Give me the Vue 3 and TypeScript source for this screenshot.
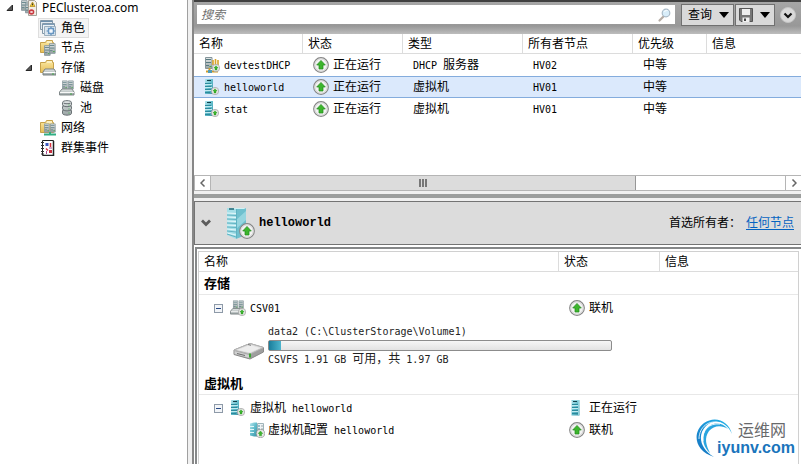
<script setup lang="ts">
import { h, ref } from 'vue'

interface TreeItem {
  label: string
  icon: string
  level: number
  open?: boolean
}

interface Role {
  name: string
  icon: string
  status: string
  type: string
  owner: string
  priority: string
}

const tree: TreeItem[] = [
  { label: 'PECluster.oa.com', icon: 'cluster', level: 0, open: true },
  { label: '角色', icon: 'roles', level: 1 },
  { label: '节点', icon: 'nodes', level: 1 },
  { label: '存储', icon: 'storage', level: 1, open: true },
  { label: '磁盘', icon: 'disks', level: 2 },
  { label: '池', icon: 'pool', level: 2 },
  { label: '网络', icon: 'network', level: 1 },
  { label: '群集事件', icon: 'events', level: 1 },
]

const roles: Role[] = [
  { name: 'devtestDHCP', icon: 'dhcp', status: '正在运行', type: 'DHCP 服务器', owner: 'HV02', priority: '中等' },
  { name: 'helloworld', icon: 'vm', status: '正在运行', type: '虚拟机', owner: 'HV01', priority: '中等' },
  { name: 'stat', icon: 'vm', status: '正在运行', type: '虚拟机', owner: 'HV01', priority: '中等' },
]

const selectedNode = ref('角色')
const selectedRole = ref('helloworld')
const query = ref('')
const usedPercent = 3.5

// Latin runs are set in a half-width face beside the full-width characters.
const Mixed = (props: { text: string }) =>
  h(
    'span',
    { class: 'mixed' },
    (props.text.match(/[\x20-\x7e]+|[^\x20-\x7e]+/g) ?? []).map((part) =>
      h('span', { class: /^[\x20-\x7e]/.test(part) ? 'latin' : 'han' }, part),
    ),
  )
Mixed.props = ['text']
</script>

<template>
  <div class="app">
    <svg class="sprite" width="0" height="0" aria-hidden="true">
      <defs>
        <linearGradient id="g-teal" x1="0" y1="0" x2="1" y2="1">
          <stop offset="0" stop-color="#b5e6ee" />
          <stop offset="0.5" stop-color="#62bccb" />
          <stop offset="1" stop-color="#3a93a6" />
        </linearGradient>
        <linearGradient id="g-gray" x1="0" y1="0" x2="0" y2="1">
          <stop offset="0" stop-color="#e4e8e8" />
          <stop offset="1" stop-color="#98a2a3" />
        </linearGradient>
        <linearGradient id="g-folder" x1="0" y1="0" x2="0" y2="1">
          <stop offset="0" stop-color="#fbe9a4" />
          <stop offset="1" stop-color="#e5bd55" />
        </linearGradient>
        <linearGradient id="g-arc" x1="0" y1="1" x2="1" y2="0">
          <stop offset="0" stop-color="#1470bd" />
          <stop offset="0.6" stop-color="#1c9bdc" />
          <stop offset="1" stop-color="#28b7e8" />
        </linearGradient>
        <symbol id="i-up" viewBox="0 0 16 16">
          <circle cx="8" cy="8" r="7.3" fill="#f3f3f3" stroke="#858585" stroke-width="1.2" />
          <circle cx="8" cy="8" r="6.2" fill="none" stroke="#d2d2d2" />
          <path d="M8 3.4 12.3 8H10v4H6V8H3.7z" fill="#3db52d" stroke="#218a1b" stroke-width="0.7" />
        </symbol>
        <symbol id="i-tower" viewBox="0 0 16 16">
          <path d="M2.500.5h8v15h-8z" fill="url(#g-teal)" />
          <path d="M2.500.5h8M9.500.5v15" stroke="#8fd3de" />
          <path d="M4 1.500h4" stroke="#123f49" />
          <path d="M3 4.500h6M3 7.500h6M3 10.500h6M3 13.500h6" stroke="#2b8a9d" />
          <path d="M3 5.500h6M3 8.500h6M3 11.500h6" stroke="#c2eaf0" />
        </symbol>
        <symbol id="i-server" viewBox="0 0 8 12">
          <path d="M.5.5h6.500v11H.5z" fill="url(#g-gray)" stroke="#84949a" />
          <path d="M1 2.500h5M1 5.500h5M1 8.500h3" stroke="#567a80" />
          <path d="M4.500 9.500h2" stroke="#43a847" />
        </symbol>
        <symbol id="i-vm" viewBox="0 0 16 16">
          <path d="M1 0h8v15H1z" fill="url(#g-teal)" />
          <path d="M3 1.500h4" stroke="#123f49" />
          <path d="M1 4.500h6M1 7.500h6M1 10.500h6M1 13.500h5" stroke="#2b8a9d" />
          <path d="M1 5.500h7M1 8.500h7M1 11.500h7" stroke="#c2eaf0" />
          <use href="#i-up" x="7" y="8" width="8" height="8" />
        </symbol>
        <symbol id="i-config" viewBox="0 0 16 16">
          <path d="M1 1.500 5 .5v14l-4-1zM5 .5h3v14H5z" fill="url(#g-teal)" />
          <path d="M1 4.500h4M1 7.500h4M1 10.500h4" stroke="#e3f8fa" />
          <path d="M8.500 1.500h6v12h-6z" fill="#eef3f5" stroke="#9fb4ba" />
          <path d="M9 4h2M9 7h2M9 10h2" stroke="#398fa3" />
          <path d="M12 4h2M12 7h2" stroke="#97a5a9" />
          <use href="#i-up" x="7" y="7" width="9" height="9" />
        </symbol>
        <symbol id="i-dhcp" viewBox="0 0 16 16">
          <use href="#i-server" x="1" y="0" width="8" height="12" />
          <path d="M9 3v5M11.500 2v6M14 3v5" stroke="#d9a32a" stroke-width="1.600" />
          <path d="M2 14.500h12M5.500 11v3" stroke="#d09c2a" stroke-width="2" />
          <path d="M4 13h4v3H4z" fill="#4f9bb8" />
          <use href="#i-up" x="8" y="7" width="8" height="8" />
        </symbol>
        <symbol id="i-cluster" viewBox="0 0 16 16">
          <use href="#i-server" x="0" y="0" width="7" height="11" />
          <use href="#i-server" x="4" y="2" width="7" height="12" />
          <path d="M7.500.5h6l2 2v13h-8z" fill="#f3eee6" stroke="#a6a198" />
          <path d="m11.500 2 2.500 4.500H9z" fill="#f3cc37" stroke="#ad8717" stroke-width=".7" />
          <path d="M11.500 3.500v1.800" stroke="#333" />
          <circle cx="10.500" cy="12" r="2.800" fill="#c93b42" />
          <path d="m9.500 11 2 2m0-2-2 2" stroke="#fff" />
        </symbol>
        <symbol id="i-roles" viewBox="0 0 16 16">
          <path d="M.5.5h12v9H.5z" fill="#e3eaf0" stroke="#8398a9" />
          <path d="M1 1.500h11" stroke="#6d90ad" />
          <path d="M2.500 3.500h12v10h-12z" fill="#eef3f7" stroke="#8398a9" />
          <path d="M3 4.500h11" stroke="#7f9fba" />
          <path d="M4.500 6.500h11v9h-11z" fill="#dae5ee" stroke="#9aaebd" />
          <path d="M11 6.500v9M6.500 11h9M8 8l6 6M14 8l-6 6" stroke="#6f9bc1" stroke-width="1.200" />
          <circle cx="11" cy="11" r="2.800" fill="#cfe0f0" stroke="#6594c0" stroke-width="1.200" />
          <circle cx="11" cy="11" r="1" fill="#fff" />
        </symbol>
        <symbol id="i-folder" viewBox="0 0 16 16">
          <path d="M.5 2.500h5l1-2h6v2h1v10H.5z" fill="url(#g-folder)" stroke="#c7a24a" />
          <path d="M7 2h5" stroke="#fffbe6" />
        </symbol>
        <symbol id="i-nodes" viewBox="0 0 16 16">
          <use href="#i-folder" width="16" height="16" />
          <use href="#i-server" x="4" y="5" width="7" height="11" />
          <use href="#i-server" x="9" y="3" width="7" height="11" />
        </symbol>
        <symbol id="i-storage" viewBox="0 0 16 16">
          <use href="#i-folder" width="16" height="16" />
          <path d="M5 9h9l2 3v3H3v-3z" fill="url(#g-gray)" stroke="#7b8384" />
          <path d="M3.500 12.500h12" stroke="#fff" />
          <path d="M12 14h2" stroke="#43a847" />
        </symbol>
        <symbol id="i-disks" viewBox="0 0 16 16">
          <use href="#i-server" x="3" y="0" width="6" height="10" />
          <use href="#i-server" x="9" y="0" width="6" height="10" />
          <path d="M3 9h10l2 3v3H.5v-3z" fill="url(#g-gray)" stroke="#81898a" />
          <path d="M1 12.500h14" stroke="#f8f8f8" />
          <path d="M11 14h2" stroke="#43a847" />
        </symbol>
        <symbol id="i-csv" viewBox="0 0 16 16">
          <use href="#i-disks" width="15" height="15" />
          <use href="#i-up" x="8" y="8" width="8" height="8" />
        </symbol>
        <symbol id="i-pool" viewBox="0 0 16 16">
          <path d="M3.500 2.500c0-2.500 9-2.500 9 0v2.300c0 1-1 1-1 1s1 0 1 1v2c0 1-1 1-1 1s1 0 1 1v2.500c0 2.500-9 2.500-9 0v-2.500c0-1 1-1 1-1s-1 0-1-1v-2c0-1 1-1 1-1s-1 0-1-1z" fill="url(#g-gray)" stroke="#6b7376" />
          <path d="M4.500 3c1.500 1 5.500 1 7 0M4 5.800c2 1.200 6 1.200 8 0M4 10c2 1.200 6 1.200 8 0" fill="none" stroke="#697174" />
          <path d="M9.500 5h1M9.500 9h1M9.500 13h1" stroke="#3daf49" />
        </symbol>
        <symbol id="i-network" viewBox="0 0 16 16">
          <use href="#i-folder" width="16" height="16" />
          <use href="#i-server" x="4" y="3" width="6" height="10" />
          <use href="#i-server" x="10" y="3" width="6" height="10" />
          <path d="M4 14.500h12M10 12v3" stroke="#30ae83" stroke-width="2" />
        </symbol>
        <symbol id="i-events" viewBox="0 0 16 16">
          <path d="M2.500.5h11v15h-11z" fill="#fff" stroke="#222" />
          <path d="M13.500 1v14.500H3" fill="none" stroke="#222" stroke-width="1.500" />
          <path d="M1 2.500h3M1 5.500h3M1 8.500h3M1 11.500h3M1 14h3" stroke="#333" />
          <path d="M5.500 3h3v3h-3z" fill="#3c58bf" />
          <path d="M10.500 3v4M6 8.500l2 2" stroke="#d8343f" stroke-width="1.500" />
          <path d="M6.500 11v3M9 8h3" stroke="#a54b91" />
          <path d="M9 10h3v3H9z" fill="#c82f40" />
        </symbol>
        <symbol id="i-drive" viewBox="0 0 32 20">
          <path d="M1 9 17 2.500l13.500 4v4.500L17 18 1 13.500z" fill="#9e9e9e" stroke="#8a8a8a" />
          <path d="M1 9 17 2.500l13.500 4L17 13z" fill="#dcdcdc" stroke="#b5b5b5" />
          <path d="m4 9 13-5 10 3-10 4.500z" fill="#ededed" />
          <path d="m1.500 10 15 4V17l-15-4z" fill="#cfd0d0" />
          <path d="M4 12.500 12 14.500" stroke="#6c6c6c" />
          <path d="M17 12.500v4" stroke="#39a82f" stroke-width="2" />
          <path d="m15 3.500 3 .8" stroke="#777" />
        </symbol>
        <symbol id="i-big-vm" viewBox="0 0 30 34">
          <path d="M1 2h9v31l-9-4z" fill="#a5dfe8" />
          <path d="M10 2h10v27l-10 4z" fill="#6fc0ce" />
          <path d="M1 2h19l-2 1h-8z" fill="#d0f1f5" />
          <path d="M3 3h5" stroke="#1f6675" stroke-width="1.500" />
          <path d="m1 7 9 .5M1 11l9 .5M1 15l9 .5M1 19l9 .5M1 23l9 1M1 27l9 2" stroke="#e3f7fa" />
          <path d="m1 9 9 .5M1 13l9 .5M1 17l9 .5M1 21l9 .5M1 25l9 1M1 28l9 3" stroke="#63b3c2" />
          <path d="m10 14 10-9v9l-10 9z" fill="#a5dee7" opacity=".7" />
          <path d="M10.500 3v29" stroke="#5fb3c2" />
          <use href="#i-up" x="13" y="17" width="16" height="16" />
        </symbol>
      </defs>
    </svg>

    <nav class="sidebar" aria-label="故障转移群集">
      <ul class="tree">
        <li v-for="item in tree" :key="item.label" :class="['node', `level-${item.level}`]">
          <span class="twisty">
            <svg v-if="item.open" width="8" height="8" viewBox="0 0 8 8" aria-hidden="true">
              <path d="M6.500 1v5.500H1z" fill="#595959" stroke="#262626" />
            </svg>
          </span>
          <button
            type="button"
            :class="['node-label', { current: item.label === selectedNode }]"
            @click="selectedNode = item.label"
          >
            <svg class="icon" aria-hidden="true"><use :href="`#i-${item.icon}`" /></svg>
            <span>{{ item.label }}</span>
          </button>
        </li>
      </ul>
    </nav>

    <main class="main">
      <form class="toolbar" @submit.prevent>
        <label class="search">
          <input v-model="query" type="text" placeholder="搜索" aria-label="搜索" />
          <svg width="16" height="16" viewBox="0 0 16 16" aria-hidden="true">
            <path d="m2.500 13.500 4-4" stroke="#b5aca4" stroke-width="2.200" stroke-linecap="round" />
            <circle cx="9" cy="6" r="3.800" fill="#d8edf9" stroke="#a9bac7" stroke-width="1.200" />
            <path d="M7.500 5c.5-1.500 2-2 3-1.500" fill="none" stroke="#fff" />
          </svg>
        </label>
        <button type="button" class="tool query">
          查询
          <svg width="10" height="6" viewBox="0 0 10 6" aria-hidden="true"><path d="M0 0h10L5 6z" /></svg>
        </button>
        <button type="button" class="tool save" aria-label="保存">
          <svg width="14" height="14" viewBox="0 0 14 14" aria-hidden="true">
            <path d="M.5.5h13v13H2l-1.500-1.500z" fill="#777" stroke="#555" />
            <path d="M3 1h8v6H3z" fill="#eee" />
            <path d="M3.500 9.500h7V14h-7z" fill="#f0f0f0" />
            <path d="M5 10.500h2V13H5z" fill="#444" />
          </svg>
          <svg width="10" height="6" viewBox="0 0 10 6" aria-hidden="true"><path d="M0 0h10L5 6z" /></svg>
        </button>
        <button type="button" class="round" aria-label="展开">
          <svg width="16" height="16" viewBox="0 0 16 16" aria-hidden="true">
            <circle cx="8" cy="8" r="7.500" fill="#d9d9d9" stroke="#c4c4c4" />
            <path d="m4.500 6.500 3.500 3.500 3.500-3.500" fill="none" stroke="#111" stroke-width="2.200" />
          </svg>
        </button>
      </form>

      <section class="roles">
        <table class="grid">
          <colgroup>
            <col class="c-name" /><col class="c-status" /><col class="c-type" />
            <col class="c-owner" /><col class="c-priority" /><col />
          </colgroup>
          <thead>
            <tr>
              <th>名称</th><th>状态</th><th>类型</th><th>所有者节点</th><th>优先级</th><th>信息</th>
            </tr>
          </thead>
          <tbody>
            <tr
              v-for="role in roles"
              :key="role.name"
              :class="{ selected: role.name === selectedRole }"
              @click="selectedRole = role.name"
            >
              <td>
                <span class="cell">
                  <svg class="icon" aria-hidden="true"><use :href="`#i-${role.icon}`" /></svg>
                  <Mixed :text="role.name" />
                </span>
              </td>
              <td>
                <span class="cell">
                  <svg class="icon" aria-hidden="true"><use href="#i-up" /></svg>
                  <Mixed :text="role.status" />
                </span>
              </td>
              <td><Mixed :text="role.type" /></td>
              <td><Mixed :text="role.owner" /></td>
              <td><Mixed :text="role.priority" /></td>
              <td></td>
            </tr>
          </tbody>
        </table>
      </section>

      <div class="scrollbar">
        <button type="button" aria-label="向左滚动">
          <svg width="6" height="8" viewBox="0 0 6 8" aria-hidden="true"><path d="M4.500.5 1 4l3.500 3.500" fill="none" stroke="#666" stroke-width="1.500" /></svg>
        </button>
        <div class="track"><div class="thumb"><i></i><i></i><i></i></div></div>
        <button type="button" aria-label="向右滚动">
          <svg width="6" height="8" viewBox="0 0 6 8" aria-hidden="true"><path d="M1.500.5 5 4 1.500 7.500" fill="none" stroke="#666" stroke-width="1.500" /></svg>
        </button>
      </div>
      <div class="splitter"></div>

      <header class="summary">
        <button type="button" class="collapse" aria-label="折叠">
          <svg width="10" height="8" viewBox="0 0 10 8" aria-hidden="true"><path d="m1 1.500 4 4 4-4" fill="none" stroke="#5c5c5c" stroke-width="2.800" /></svg>
        </button>
        <svg class="big-icon" aria-hidden="true"><use href="#i-big-vm" /></svg>
        <h1>{{ selectedRole }}</h1>
        <span class="owners">首选所有者：</span>
        <a href="#">任何节点</a>
      </header>

      <section class="detail">
        <div class="frame">
          <table class="grid resources">
            <colgroup><col class="r-name" /><col class="r-status" /><col /></colgroup>
            <thead>
              <tr><th>名称</th><th>状态</th><th>信息</th></tr>
            </thead>
            <tbody>
              <tr class="group"><td colspan="3">存储</td></tr>
              <tr class="first">
                <td>
                  <span class="cell branch">
                    <button type="button" class="minus" aria-label="折叠 CSV01"></button>
                    <svg class="icon" aria-hidden="true"><use href="#i-csv" /></svg>
                    <Mixed text="CSV01" />
                  </span>
                </td>
                <td>
                  <span class="cell">
                    <svg class="icon" aria-hidden="true"><use href="#i-up" /></svg>
                    <Mixed text="联机" />
                  </span>
                </td>
                <td></td>
              </tr>
              <tr>
                <td colspan="3">
                  <div class="volume">
                    <svg class="drive" aria-hidden="true"><use href="#i-drive" /></svg>
                    <div class="volume-info">
                      <Mixed text="data2 (C:\ClusterStorage\Volume1)" />
                      <div class="meter"><div class="used" :style="{ width: usedPercent + '%' }"></div></div>
                      <Mixed text="CSVFS 1.91 GB 可用，共 1.97 GB" />
                    </div>
                  </div>
                </td>
              </tr>
              <tr class="group"><td colspan="3">虚拟机</td></tr>
              <tr class="first">
                <td>
                  <span class="cell branch">
                    <button type="button" class="minus" aria-label="折叠虚拟机"></button>
                    <svg class="icon" aria-hidden="true"><use href="#i-vm" /></svg>
                    <Mixed text="虚拟机 helloworld" />
                  </span>
                </td>
                <td>
                  <span class="cell">
                    <svg class="icon" aria-hidden="true"><use href="#i-tower" /></svg>
                    <Mixed text="正在运行" />
                  </span>
                </td>
                <td></td>
              </tr>
              <tr>
                <td>
                  <span class="cell leaf">
                    <svg class="icon" aria-hidden="true"><use href="#i-config" /></svg>
                    <Mixed text="虚拟机配置 helloworld" />
                  </span>
                </td>
                <td>
                  <span class="cell">
                    <svg class="icon" aria-hidden="true"><use href="#i-up" /></svg>
                    <Mixed text="联机" />
                  </span>
                </td>
                <td></td>
              </tr>
            </tbody>
          </table>
        </div>
      </section>
    </main>

    <div class="brand">
      <svg width="42" height="42" viewBox="0 0 42 42" aria-hidden="true">
        <path d="M37 17C34 4 20-2 9 6-3 15-1 34 19 40 5 32 2 18 11 9c9-8 21-4 26 8z" fill="url(#g-arc)" />
        <path d="M33 12C26 4 15 5 10 14c-4 8-1 17 5 22-4-8-6-15-1-22 5-6 13-6 19-2z" fill="#2aa5df" />
        <path d="M4 22C4 10 14 2 26 6M8 24C7 13 14 6 25 7" fill="none" stroke="#fff" stroke-width=".8" />
      </svg>
      <div class="brand-text">
        <span class="brand-name">运维网</span>
        <span class="brand-host">iyunv.com</span>
      </div>
    </div>
  </div>
</template>

<style>
body {
  margin: 0;
}

.mixed {
  white-space: pre;
}

.latin {
  font-family: 'DejaVu Sans Mono', monospace;
  font-size: 10px;
}
</style>

<style scoped>
.app {
  display: flex;
  position: relative;
  min-height: 100vh;
  overflow: hidden;
  background: #fff;
  color: #000;
  font: 12px/16px 'Noto Sans', 'Noto Sans CJK SC', sans-serif;
}

.sprite {
  position: absolute;
}

button {
  margin: 0;
  padding: 0;
  border: 0;
  background: none;
  color: inherit;
  font: inherit;
}

.icon {
  flex: none;
  width: 16px;
  height: 16px;
}

.sidebar {
  flex: none;
  box-sizing: border-box;
  width: 192px;
  border-right: 4px solid #f0f0f0;
  box-shadow: inset -1px 0 #a0a0a0;
}

.tree {
  margin: -2px 0 0;
  padding: 0;
  list-style: none;
}

.node {
  display: flex;
  align-items: center;
  height: 20px;
  padding-left: 6px;
}

.level-1 {
  padding-left: 25px;
}

.level-2 {
  padding-left: 44px;
}

.twisty {
  display: flex;
  width: 13px;
}

.node-label {
  display: flex;
  align-items: center;
  gap: 5px;
  padding: 1px 3px 1px 1px;
  border: 1px solid transparent;
}

.node-label.current {
  border-color: #dedede;
  background: #f4f4f4;
}

.main {
  display: flex;
  flex: 1;
  flex-direction: column;
  min-width: 0;
  border-left: 2px solid #878787;
}

.toolbar {
  display: flex;
  align-items: flex-start;
  height: 27px;
  padding: 2px 5px 3px 3px;
  border-top: 2px solid #404040;
  background: linear-gradient(#a6a6a6, #989898 75%, #bdbdbd);
}

.search {
  display: flex;
  flex: 1;
  align-items: center;
  height: 19px;
  margin: 1px 6px 0 0;
  padding-right: 2px;
  background: #fff;
}

.search input {
  flex: 1;
  min-width: 0;
  padding: 0 4px;
  border: 0;
  outline: 0;
  background: transparent;
  font: inherit;
}

.search input::placeholder {
  color: #707070;
  font-style: italic;
}

.tool {
  display: flex;
  align-items: center;
  justify-content: space-between;
  box-sizing: border-box;
  height: 22px;
  border: 1px solid #707070;
  background: #d9d9d9;
}

.query {
  width: 53px;
  padding: 0 4px 0 6px;
}

.save {
  width: 40px;
  margin: 0 5px 0 1px;
  padding: 0 4px 0 3px;
}

.round {
  display: flex;
  padding-top: 3px;
}

.grid {
  width: 100%;
  border-collapse: separate;
  border-spacing: 0;
  table-layout: fixed;
}

.grid th {
  box-sizing: border-box;
  height: 20px;
  padding: 0 5px;
  border-right: 1px solid #dcdcdc;
  border-bottom: 1px solid #dcdcdc;
  font-weight: normal;
  text-align: left;
  white-space: nowrap;
}

.grid th:last-child {
  border-right: 0;
}

.grid td {
  padding: 0;
}

.roles {
  min-height: 141px;
}

.roles td {
  box-sizing: border-box;
  height: 22px;
  padding-left: 10px;
  border: 0 solid transparent;
  border-width: 1px 0;
}

.roles .selected td {
  border-color: #84acdd;
  background: #dbe9fc;
}

.c-name { width: 109px; }
.c-status { width: 100px; }
.c-type { width: 120px; }
.c-owner { width: 110px; }
.c-priority { width: 74px; }
.r-name { width: 360px; }
.r-status { width: 101px; }

.cell {
  display: flex;
  align-items: center;
  gap: 4px;
}

.scrollbar {
  display: flex;
  height: 14px;
  border: 1px solid #b5b5b5;
  border-right: 0;
}

.scrollbar button {
  display: flex;
  align-items: center;
  justify-content: center;
  width: 15px;
}

.track {
  flex: 1;
  border: 0 solid #b5b5b5;
  border-width: 0 1px;
}

.thumb {
  display: flex;
  align-items: center;
  justify-content: center;
  gap: 1px;
  box-sizing: border-box;
  width: 74%;
  height: 100%;
  border-right: 1px solid #979797;
  background: #dcdcdc;
}

.thumb i {
  width: 2px;
  height: 8px;
  background: #777;
}

.splitter {
  height: 4px;
  border: solid #f0f0f0;
  border-width: 3px 0;
  background: #9c9e9d;
}

.summary {
  display: flex;
  align-items: center;
  box-sizing: border-box;
  min-height: 44px;
  padding: 0 7px 0 6px;
  border: 1px solid #747474;
  border-right: 0;
  background: #dcdcdc;
}

.collapse {
  display: flex;
  margin-right: 15px;
}

.big-icon {
  width: 30px;
  height: 34px;
}

.summary h1 {
  flex: 1;
  margin: 0 0 0 3px;
  font: bold 12px/16px 'Liberation Mono', monospace;
}

.summary a {
  margin-left: 5px;
  color: #0563c1;
  text-decoration: underline;
  text-underline-offset: 2px;
}

.detail {
  display: flex;
  flex: 1;
  margin: 2px 0 0 1px;
  padding: 2px 2px 0 1px;
  border: 0 solid #868889;
  border-width: 2px 0 0 2px;
}

.frame {
  flex: 1;
  min-width: 0;
  border: 1px solid #d0d0d0;
  border-bottom: 0;
}

.resources tbody {
  vertical-align: top;
}

.resources td:nth-child(2) {
  padding-left: 10px;
}

.resources .group td {
  box-sizing: border-box;
  height: 23px;
  padding-left: 5px;
  border-bottom: 1px solid #e8e8e8;
  font-size: 13px;
  font-weight: bold;
  vertical-align: middle;
}

.resources .cell {
  height: 22px;
}

.first .cell {
  margin-top: 2px;
}

.branch {
  padding-left: 15px;
}

.branch .icon {
  margin-left: 3px;
}

.leaf {
  gap: 3px;
  padding-left: 50px;
}

.minus {
  display: flex;
  align-items: center;
  justify-content: center;
  width: 9px;
  height: 9px;
  border: 1px solid #8e9aa8;
  box-sizing: border-box;
  background: #f3f5f8;
}

.minus::before {
  width: 5px;
  height: 1px;
  background: #274a86;
  content: '';
}

.volume {
  display: flex;
  align-items: center;
  gap: 3px;
  padding: 4px 0 4px 34px;
}

.drive {
  width: 32px;
  height: 20px;
  margin-top: 10px;
}

.volume-info {
  width: 344px;
}

.volume-info .mixed {
  display: block;
  color: #222;
}

.meter {
  box-sizing: border-box;
  height: 11px;
  border: 1px solid #8c8c8c;
  border-radius: 2px;
  background: linear-gradient(#f6f6f6, #e2e2e2);
}

.used {
  height: 100%;
  background: linear-gradient(90deg, #1a7e9c, #4db5cd);
}

.brand {
  display: flex;
  position: absolute;
  right: 6px;
  bottom: 5px;
}

.brand-text {
  display: flex;
  flex-direction: column;
  align-items: flex-end;
  margin: 3px 0 0 -20px;
}

.brand-name {
  margin-right: 9px;
  color: #68696b;
  font-size: 16px;
  line-height: 20px;
}

.brand-host {
  color: #1a75bc;
  font: bold 16px/16px 'Liberation Sans', sans-serif;
}
</style>
